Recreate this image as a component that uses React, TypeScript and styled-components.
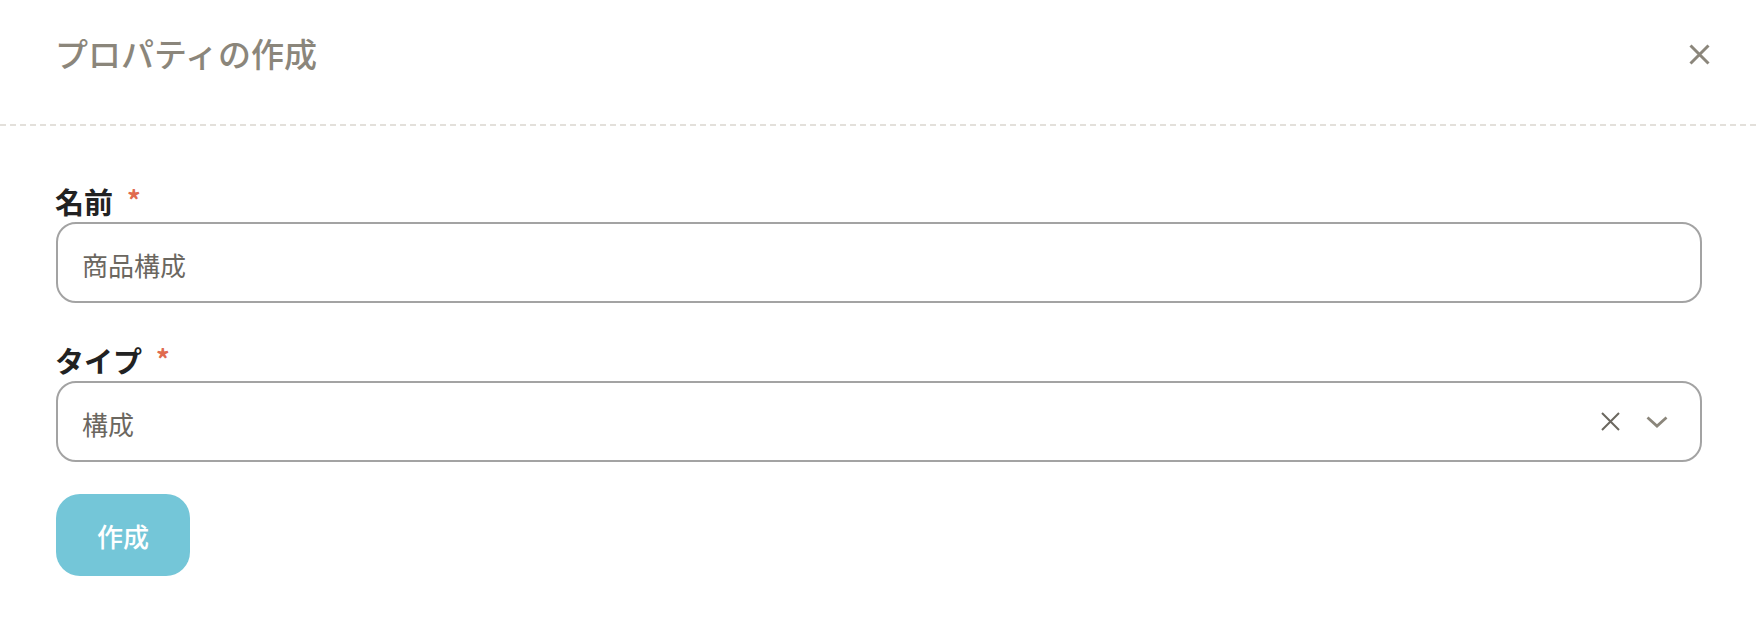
import React from "react";
import styled, { createGlobalStyle } from "styled-components";

const GlobalStyle = createGlobalStyle`
  html, body {
    margin: 0;
    padding: 0;
    background: #ffffff;
  }
  body {
    font-family: "Noto Sans CJK JP", "Noto Sans", sans-serif;
  }
  * { box-sizing: border-box; }
`;

const Dialog = styled.div`
  width: 1760px;
  height: 640px;
  background: #fff;
  display: flex;
  flex-direction: column;
`;

const Header = styled.div`
  height: 126px;
  padding: 28px 50px 0 55px;
  display: flex;
  align-items: flex-start;
  justify-content: space-between;
  background-image: linear-gradient(to right, #e3e0db 60%, transparent 60%);
  background-size: 10px 2px;
  background-repeat: repeat-x;
  background-position: 0 124px;
`;

const Title = styled.h2`
  margin: 0;
  font-size: 33px;
  line-height: 50px;
  font-weight: 500;
  color: #8b867b;
`;

const CloseButton = styled.button`
  margin-top: 16px;
  width: 21px;
  height: 21px;
  padding: 0;
  border: none;
  background: transparent;
  display: flex;
  cursor: pointer;
`;

const Body = styled.div`
  padding: 54px 58px 0 56px;
  display: flex;
  flex-direction: column;
`;

const Field = styled.div<{ $gap?: number }>`
  display: flex;
  flex-direction: column;
  margin-bottom: ${(p) => p.$gap ?? 36}px;
`;

const Label = styled.label`
  display: flex;
  align-items: flex-start;
  font-size: 29px;
  line-height: 42px;
  font-weight: 700;
  color: #222222;
  margin-left: -1px;
`;

const Required = styled.span`
  color: #e06b4f;
  font-size: 27px;
  line-height: 30px;
  margin-left: 14px;
  margin-top: 5px;
  font-weight: 700;
`;

const Box = styled.div`
  height: 81px;
  border: 2px solid #a3a3a3;
  border-radius: 20px;
  padding: 0 32px 0 24px;
  display: flex;
  align-items: center;
  justify-content: space-between;
`;

const Value = styled.span`
  font-size: 26px;
  font-weight: 400;
  color: #6b675f;
  padding-top: 3px;
`;

const Icons = styled.div`
  display: flex;
  align-items: center;
  gap: 26px;
`;

const IconSlot = styled.span<{ $w: number; $h: number }>`
  display: flex;
  width: ${(p) => p.$w}px;
  height: ${(p) => p.$h}px;
`;

const SubmitButton = styled.button`
  width: 134px;
  height: 82px;
  border: none;
  border-radius: 24px;
  background: #74c6d8;
  color: #ffffff;
  font-family: "Noto Sans CJK JP", "Noto Sans", sans-serif;
  font-size: 26px;
  font-weight: 500;
  padding: 0;
  cursor: pointer;
`;

export default function App() {
  return (
    <>
      <GlobalStyle />
      <Dialog>
        <Header>
          <Title>プロパティの作成</Title>
          <CloseButton aria-label="閉じる">
            <svg width="21" height="21" viewBox="0 0 21 21">
              <path d="M1.5 1.5 L19.5 19.5 M19.5 1.5 L1.5 19.5" stroke="#8b867b" strokeWidth="3" strokeLinecap="butt" />
            </svg>
          </CloseButton>
        </Header>
        <Body>
          <Field>
            <Label>
              名前<Required>*</Required>
            </Label>
            <Box>
              <Value>商品構成</Value>
            </Box>
          </Field>
          <Field $gap={32}>
            <Label>
              タイプ<Required>*</Required>
            </Label>
            <Box>
              <Value>構成</Value>
              <Icons>
                <IconSlot $w={19} $h={19}>
                  <svg width="19" height="19" viewBox="0 0 19 19">
                    <path d="M1 1 L18 18 M18 1 L1 18" stroke="#6b675f" strokeWidth="2" />
                  </svg>
                </IconSlot>
                <IconSlot $w={22} $h={12}>
                  <svg width="22" height="12" viewBox="0 0 22 12">
                    <path d="M1.5 1.5 L11 10 L20.5 1.5" stroke="#8b867b" strokeWidth="2.8" fill="none" />
                  </svg>
                </IconSlot>
              </Icons>
            </Box>
          </Field>
          <div>
            <SubmitButton>作成</SubmitButton>
          </div>
        </Body>
      </Dialog>
    </>
  );
}
